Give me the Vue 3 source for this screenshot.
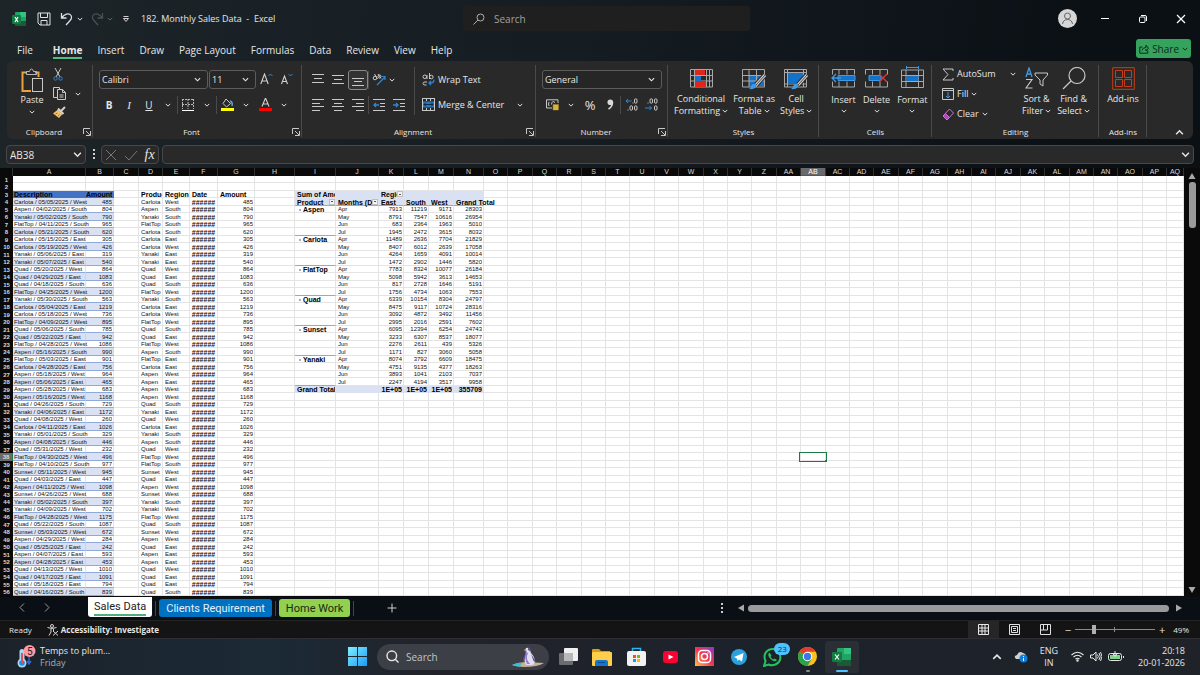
<script setup>
import { h } from 'vue'

const Chevron = (props) =>
  h('svg', { class: 'chev', width: props.s || 6, height: props.s || 6, viewBox: '0 0 8 8', fill: 'none', stroke: 'currentColor', 'stroke-width': 1.3 }, [
    h('path', { d: props.up ? 'M1 5.5 4 2.5 7 5.5' : 'M1 2.5 4 5.5 7 2.5' })
  ])
Chevron.props = { s: String, up: Boolean }

const Launcher = () =>
  h('svg', { width: 8, height: 8, viewBox: '0 0 8 8', fill: 'none', stroke: '#c8c8c8' }, [
    h('path', { d: 'M.5 6V.5H7M3 3l4 4M7.500 3v4.500H3' })
  ])

const menu = ['File', 'Home', 'Insert', 'Draw', 'Page Layout', 'Formulas', 'Data', 'Review', 'View', 'Help']

const letters = 'ABCDEFGHIJKLMNOPQRSTUVWXYZ'.split('')
const cols = [...letters, ...letters.slice(0, 17).map((l) => 'A' + l)]
const baseWidths = [73, 28, 25, 24, 27, 28, 37, 40, 41, 43, 25, 25, 25, 30]
const tailWidths = [24, 25, 24, 25, 24]
const widths = cols.map((c, i) => (i < 14 ? baseWidths[i] : i === cols.length - 1 ? null : tailWidths[(i - 14) % 5]))

const sales = `Carlota 05/05 West 485
Aspen 04/02 South 804
Yanaki 05/02 South 790
FlatTop 04/11 South 965
Carlota 05/21 South 620
Carlota 05/15 East 305
Carlota 05/19 West 426
Yanaki 05/06 East 319
Yanaki 05/07 East 540
Quad 05/20 West 864
Quad 04/29 East 1083
Quad 04/18 South 636
FlatTop 04/25 West 1200
Yanaki 05/30 South 563
Carlota 05/04 East 1219
Carlota 05/18 West 736
FlatTop 04/09 West 895
Quad 05/06 South 785
Quad 05/22 East 942
FlatTop 04/28 West 1086
Aspen 05/16 South 990
FlatTop 05/03 East 901
Carlota 04/28 East 756
Aspen 05/18 West 964
Aspen 05/06 East 465
Aspen 05/28 West 683
Aspen 05/16 West 1168
Quad 04/26 South 729
Yanaki 04/06 East 1172
Quad 04/08 West 260
Carlota 04/11 East 1026
Yanaki 05/01 South 329
Aspen 04/08 South 446
Quad 05/31 West 232
FlatTop 04/30 West 496
FlatTop 04/10 South 977
Sunset 05/11 West 945
Quad 04/03 East 447
Aspen 04/11 West 1098
Sunset 04/26 West 688
Yanaki 05/02 South 397
Yanaki 04/09 West 702
FlatTop 04/28 West 1175
Quad 05/22 South 1087
Sunset 05/03 West 672
Aspen 04/29 West 284
Quad 05/25 East 242
Aspen 04/07 East 593
Aspen 04/28 East 453
Quad 04/13 West 1010
Quad 04/17 East 1091
Quad 05/18 East 794
Quad 04/16 South 839`.split('\n').map((l) => l.split(' '))

const products = ['Aspen', 'Carlota', 'FlatTop', 'Quad', 'Sunset', 'Yanaki']
const months = ['Apr', 'May', 'Jun', 'Jul']
const pivot = [
  [7913, 11219, 9171, 28303], [8791, 7547, 10616, 26954], [683, 2364, 1963, 5010], [1945, 2472, 3615, 8032],
  [11489, 2636, 7704, 21829], [8407, 6012, 2639, 17058], [4264, 1659, 4091, 10014], [1472, 2902, 1446, 5820],
  [7783, 8324, 10077, 26184], [5098, 5942, 3613, 14653], [817, 2728, 1646, 5191], [1756, 4734, 1063, 7553],
  [6339, 10154, 8304, 24797], [8475, 9117, 10724, 28316], [3092, 4872, 3492, 11456], [2995, 2016, 2591, 7602],
  [6095, 12394, 6254, 24743], [3233, 6307, 8537, 18077], [2276, 2611, 439, 5326], [1171, 827, 3060, 5058],
  [8074, 3792, 6609, 18475], [4751, 9135, 4377, 18263], [3893, 1041, 2103, 7037], [2247, 4194, 3517, 9958]
]

function cellsFor(row) {
  const c = {}
  const put = (col, t, cls = '') => { c[col] = { t, cls } }
  if (row === 3) {
    put('A', 'Description', 'head desc')
    put('B', 'Amount', 'head num')
    put('D', 'Product', 'bold')
    put('E', 'Region', 'bold')
    put('F', 'Date', 'bold')
    put('G', 'Amount', 'bold')
    put('I', 'Sum of Amount', 'bold pv')
    put('J', '', 'pv')
    put('K', 'Region', 'bold pv drop')
    for (const k of 'LMN') put(k, '', 'pv')
  }
  if (row > 3) {
    const [p, d, r, a] = sales[row - 4]
    const band = row % 2 ? 'edge' : 'edge band'
    put('A', `${p} / ${d}/2025 / ${r}`, band + ' desc')
    put('B', a, band + ' num')
    put('D', p)
    put('E', r)
    put('F', '######', 'hash')
    put('G', a, 'num')
  }
  if (row === 4) {
    put('I', 'Product', 'bold pv pvh drop')
    put('J', 'Months (Date)', 'bold pv pvh drop')
    put('K', 'East', 'bold pv pvh')
    put('L', 'South', 'bold pv pvh')
    put('M', 'West', 'bold pv pvh')
    put('N', 'Grand Total', 'bold pv pvh spill')
  }
  if (row > 4 && row < 29) {
    const i = row - 5
    put('I', i % 4 ? '' : products[i / 4], i % 4 === 0 ? 'bold item' : i % 4 === 3 ? 'sep' : '')
    put('J', months[i % 4])
    'KLMN'.split('').forEach((k, n) => put(k, pivot[i][n], 'num'))
  }
  if (row === 29) {
    put('I', 'Grand Total', 'bold pv')
    put('J', '', 'pv')
    ;['1E+05', '1E+05', '1E+05', '355709'].forEach((v, n) => put('KLMN'[n], v, 'bold pv num'))
  }
  if (row === 38) put('AB', '', 'sel')
  return cols.map((k) => c[k] || { t: '', cls: '' })
}
const rows = Array.from({ length: 56 }, (_, i) => ({ n: i + 1, cells: cellsFor(i + 1) }))
</script>

<template>
  <div class="app">
    <header class="titlebar">
      <div class="quick">
        <svg class="logo" width="14" height="14" viewBox="0 0 14 14"><rect x="3" width="11" height="14" rx="1" fill="#21a366"/><rect x="8" width="6" height="5" fill="#33c481"/><rect x="3" y="9" width="11" height="5" fill="#185c37"/><rect y="3" width="9" height="9" rx="1" fill="#107c41"/><path d="m3 5 3 5M6 5l-3 5" stroke="#fff" stroke-width="1.2"/></svg>
        <button class="ib save" aria-label="Save"><svg width="14" height="14" viewBox="0 0 14 14" fill="none" stroke="#e0e0e0"><path d="M1 1h12v12H3l-2-2zM3.500 1v4.500h7V1M4 13V8.500h6V13"/></svg></button>
        <button class="ib undo" aria-label="Undo"><svg width="14" height="14" viewBox="0 0 14 14" fill="none" stroke="#e0e0e0" stroke-width="1.3"><path d="M1.500 1v5h5M1.800 5.800C4 2 9 .5 11 3.500c2 3-1 5-5 9.500"/></svg></button>
        <Chevron class="qc" />
        <button class="ib redo" aria-label="Redo"><svg width="14" height="14" viewBox="0 0 14 14" fill="none" stroke="#4a5055" stroke-width="1.300"><path d="M12.500 1v5h-5M12.200 5.800C10 2 5 .5 3 3.500c-2 3 1 5 5 9.500"/></svg></button>
        <Chevron class="qc dim" />
        <svg class="cust" width="8" height="8" viewBox="0 0 8 8" fill="none" stroke="#d0d0d0"><path d="M1.500 1.500h5M1.500 3.500h5L4 6.500z"/></svg>
        <span class="doc">182. Monthly Sales Data&nbsp; -&nbsp; Excel</span>
      </div>
      <label class="search"><svg width="12" height="12" viewBox="0 0 12 12" fill="none" stroke="#b0b0b0"><circle cx="7.500" cy="4.500" r="3.500"/><path d="M5 7 .5 11.500"/></svg><input type="text" placeholder="Search" aria-label="Search" /></label>
      <div class="window">
        <button class="avatar" aria-label="Account"><svg width="19" height="19" viewBox="0 0 19 19" fill="none" stroke="#666"><circle cx="9.500" cy="9.500" r="9.500" fill="#d6d6d6" stroke="none"/><circle cx="9.500" cy="7" r="3"/><path d="M4.500 15c.5-6 9.500-6 10 0"/></svg></button>
        <button class="wb" aria-label="Minimize"><svg width="10" height="10" viewBox="0 0 10 10" stroke="#fff"><path d="M1 4.500h8"/></svg></button>
        <button class="wb" aria-label="Restore"><svg width="10" height="10" viewBox="0 0 10 10" fill="none" stroke="#fff"><rect x="1.500" y="3" width="5.500" height="5.500" rx="1"/><path d="M3 1.500h4q1.500 0 1.500 1.500v4"/></svg></button>
        <button class="wb" aria-label="Close"><svg width="10" height="10" viewBox="0 0 10 10" stroke="#fff" stroke-width="1.200"><path d="m1 1 8 8M9 1 1 9"/></svg></button>
      </div>
    </header>

    <nav class="menu">
      <a v-for="m in menu" :key="m" href="#" :class="{ on: m === 'Home', file: m === 'File' }">{{ m }}</a>
      <button class="share"><svg width="10" height="10" viewBox="0 0 10 10" fill="none" stroke="#0b2b18"><path d="M3.500 3H.8v6.200h8V6.500M3 6.500q.5-3 4-3V1.200l2.500 3L7 7V5"/></svg>Share<Chevron /></button>
    </nav>

    <section class="ribbon">
      <div class="group tools">
        <div class="gbody clip">
          <button class="big paste"><svg width="24" height="26" viewBox="0 0 24 26" fill="none"><path d="M11 23H2.500V4.500H7M15 4.500h3.500V9" stroke="#e8a33d" stroke-width="2"/><path d="M6.500 6.500V3.500h3q.5-2.500 2-2.500t2 2.500h3v3z" stroke="#b8b8b8"/><rect x="12.500" y="10.500" width="10" height="13" fill="#292929" stroke="#c8c8c8"/></svg><span>Paste</span><Chevron /></button>
          <div class="cliplist">
            <button class="ib" aria-label="Cut"><svg width="10" height="13" viewBox="0 0 10 13" fill="none"><path d="M2 0l5 9M8 0 3 9" stroke="#c8c8c8"/><circle cx="2.500" cy="10.500" r="1.700" stroke="#2b88d8"/><circle cx="7.500" cy="10.500" r="1.700" stroke="#2b88d8"/></svg></button>
            <div class="cprow"><button class="ib" aria-label="Copy"><svg width="13" height="13" viewBox="0 0 13 13" fill="none" stroke="#c8c8c8"><path d="M4 10.500H.5V.5h6v2"/><path d="M4.500 2.500h5l3 3v7h-8zM9.500 2.500v3h3M6.500 8h4M6.500 10h4"/></svg></button><Chevron /></div>
            <button class="ib" aria-label="Format Painter"><svg width="13" height="12" viewBox="0 0 13 12"><path d="m5 3.500 4.500 4.500L6 12 0 7.500z" fill="#f2c06b"/><path d="m2.500 8 2-1M5 10l1.500-1.500" stroke="#8a6420" stroke-width=".8"/><path d="m5 2.500 5.500 5.500M8 5l4-4" stroke="#d0d0d0" stroke-width="2"/></svg></button>
          </div>
        </div>
        <footer>Clipboard<button class="launch" aria-label="Clipboard options"><Launcher /></button></footer>
      </div>

      <div class="group tools">
        <div class="gbody">
          <div class="row">
            <label class="sel-box f1"><select aria-label="Font"><option>Calibri</option></select><Chevron s="7" /></label>
            <label class="sel-box f2"><select aria-label="Font size"><option>11</option></select><Chevron s="7" /></label>
            <button class="ib w20" aria-label="Increase font size"><svg width="13" height="13" viewBox="0 0 13 13" fill="none"><path d="M.8 11 4.500 1 8.200 11M2 8h5" stroke="#d0d0d0" stroke-width="1.100"/><path d="m8.500 3 2-2 2 2" stroke="#2b88d8"/></svg></button>
            <button class="ib w20" aria-label="Decrease font size"><svg width="13" height="13" viewBox="0 0 13 13" fill="none"><path d="M1.500 11 4.500 3l3 8M2.500 8.500h4" stroke="#d0d0d0" stroke-width="1.100"/><path d="m8.500 1 2 2 2-2" stroke="#2b88d8"/></svg></button>
          </div>
          <div class="row">
            <button class="ib w20 b">B</button><button class="ib w20 i">I</button><button class="ib w20 u">U</button><Chevron class="w18" />
            <i class="div"></i>
            <button class="ib w20" aria-label="Borders"><svg width="12" height="12" viewBox="0 0 12 12" fill="none" stroke="#b8b8b8"><path d="M.5 0v10M11.500 0v10M6 0v10M0 .5h12M0 5.500h12" stroke-dasharray="2 1"/><path d="M0 11.500h12" stroke="#fff"/></svg></button><Chevron class="w18" />
            <i class="div"></i>
            <button class="ib w20" aria-label="Fill color"><svg width="13" height="13" viewBox="0 0 13 13" fill="none"><path d="m5 1 4.500 4.500-4 3.500L2 5.500z" stroke="#c8c8c8"/><path d="M9 3q3 1 2 5" stroke="#5aa5e0" stroke-width="1.500"/><rect y="10" width="13" height="3" fill="#ff0"/></svg></button><Chevron class="w18" />
            <button class="ib w20" aria-label="Font color"><svg width="13" height="13" viewBox="0 0 13 13" fill="none"><path d="M3 8.500 6.500 0 10 8.500M4 6h5" stroke="#d0d0d0" stroke-width="1.100"/><rect y="10" width="13" height="3" fill="#f00"/></svg></button><Chevron class="w18" />
          </div>
        </div>
        <footer>Font<button class="launch" aria-label="Font options"><Launcher /></button></footer>
      </div>

      <div class="group tools">
        <div class="gbody align">
          <div class="acol">
            <div class="row">
              <button class="ib w20" aria-label="Top align"><svg width="12" height="12" viewBox="0 0 12 12" stroke="#c8c8c8"><path d="M0 .5h12M2 4.500h8M0 8.500h12"/></svg></button>
              <button class="ib w20" aria-label="Middle align"><svg width="12" height="12" viewBox="0 0 12 12" stroke="#c8c8c8"><path d="M0 1.500h12M2 5.500h8M0 9.500h12"/></svg></button>
              <button class="ib w20 pressed" aria-label="Bottom align"><svg width="12" height="12" viewBox="0 0 12 12" stroke="#c8c8c8"><path d="M0 4.500h12M2 7.500h8M0 11.500h12"/></svg></button>
              <i class="div"></i>
              <button class="ib w20" aria-label="Orientation"><svg width="14" height="13" viewBox="0 0 14 13" fill="none"><circle cx="3" cy="5" r="1.800" stroke="#c8c8c8"/><path d="m2.500 1 3 5M6 1l3 4.500" stroke="#c8c8c8"/><circle cx="7.500" cy="3.500" r="1.500" stroke="#c8c8c8"/><path d="m5 12 8-8M9.500 3.500H13V7" stroke="#2b88d8" stroke-width="1.200"/></svg></button><Chevron />
            </div>
            <div class="row">
              <button class="ib w20" aria-label="Align left"><svg width="12" height="12" viewBox="0 0 12 12" stroke="#c8c8c8"><path d="M0 .5h12M0 4.500h8M0 7.500h12M0 11.500h8"/></svg></button>
              <button class="ib w20" aria-label="Center"><svg width="12" height="12" viewBox="0 0 12 12" stroke="#c8c8c8"><path d="M0 .5h12M2 4.500h8M0 7.500h12M2 11.500h8"/></svg></button>
              <button class="ib w20" aria-label="Align right"><svg width="12" height="12" viewBox="0 0 12 12" stroke="#c8c8c8"><path d="M0 .5h12M4 4.500h8M0 7.500h12M4 11.500h8"/></svg></button>
              <i class="div"></i>
              <button class="ib w20" aria-label="Decrease indent"><svg width="12" height="12" viewBox="0 0 12 12" fill="none" stroke="#c8c8c8"><path d="M0 .5h12M7 4.500h5M7 7.500h5M0 11.500h12"/><path d="M6 6H1M3 4 1 6l2 2" stroke="#2b88d8" stroke-width="1.300"/></svg></button>
              <button class="ib w20" aria-label="Increase indent"><svg width="12" height="12" viewBox="0 0 12 12" fill="none" stroke="#c8c8c8"><path d="M0 .5h12M7 4.500h5M7 7.500h5M0 11.500h12"/><path d="M0 6h5M3 4l2 2-2 2" stroke="#2b88d8" stroke-width="1.300"/></svg></button>
            </div>
          </div>
          <div class="wcol">
            <button class="lb"><svg width="13" height="13" viewBox="0 0 13 13" fill="none" stroke="#c8c8c8"><circle cx="2.800" cy="3.800" r="1.800"/><path d="M5 2v4M7.500 0v6M5 9H3q-2 0-2 1.500T3 12h1.500"/><circle cx="9.300" cy="4" r="1.800"/><path d="M12 6.500q0 4-5 3.500M9 8 7 10l2 2" stroke="#2b88d8" stroke-width="1.300"/></svg>Wrap Text</button>
            <button class="lb"><svg width="13" height="13" viewBox="0 0 13 13" fill="none"><rect x=".5" y=".5" width="12" height="12" stroke="#c8c8c8"/><path d="M4.500 0v3M8.500 0v3M4.500 10v3M8.500 10v3" stroke="#c8c8c8"/><rect x="1" y="3.500" width="11" height="6" fill="#2878be"/><path d="M2 6.500h9M4 4.500l-2 2 2 2M9 4.500l2 2-2 2" stroke="#0a2a48"/></svg>Merge &amp; Center<Chevron class="mc" /></button>
          </div>
        </div>
        <footer>Alignment<button class="launch" aria-label="Alignment options"><Launcher /></button></footer>
      </div>

      <div class="group tools">
        <div class="gbody">
          <div class="row"><label class="sel-box f3"><select aria-label="Number format"><option>General</option></select><Chevron s="7" /></label></div>
          <div class="row">
            <button class="ib w20" aria-label="Accounting format"><svg width="13" height="12" viewBox="0 0 13 12" fill="none"><path d="M12 4V.8H.5V9H6" stroke="#c8c8c8"/><path d="M3 3q-1 2 0 4M9 3.500Q6 1 5.500 5.500" stroke="#c8c8c8"/><path d="M7 5.500h5.500V11H7zM7 7h5.500M7 9h5.500" fill="#f2c94c" stroke="#9c7a20" stroke-width=".6"/></svg></button><Chevron class="w18" />
            <button class="ib w20 pct">%</button>
            <button class="ib w20" aria-label="Comma style"><svg width="7" height="11" viewBox="0 0 7 11"><circle cx="3.300" cy="3.300" r="2.800" fill="#d8d8d8"/><path d="M5.500 3.500q0 4-4 6.500" fill="none" stroke="#d8d8d8" stroke-width="1.500"/></svg></button>
            <i class="div"></i>
            <button class="ib w20" aria-label="Increase decimal"><svg width="13" height="13" viewBox="0 0 13 13" fill="none" stroke="#c8c8c8"><rect x="9.500" y=".8" width="2.500" height="4.400" rx="1.200"/><rect x="5" y="7.800" width="2.500" height="4.400" rx="1.200"/><rect x="9.500" y="7.800" width="2.500" height="4.400" rx="1.200"/><path d="M2.500 12h1M7.500 5h1"/><path d="M6.500 3H1M3 1 1 3l2 2" stroke="#2b88d8"/></svg></button>
            <button class="ib w20" aria-label="Decrease decimal"><svg width="13" height="13" viewBox="0 0 13 13" fill="none" stroke="#c8c8c8"><rect x="5" y=".8" width="2.500" height="4.400" rx="1.200"/><rect x="9.500" y=".8" width="2.500" height="4.400" rx="1.200"/><rect x="9.500" y="7.800" width="2.500" height="4.400" rx="1.200"/><path d="M2.500 5h1"/><path d="M0 10h6.500M4.500 8l2 2-2 2" stroke="#2b88d8"/></svg></button>
          </div>
        </div>
        <footer>Number<button class="launch" aria-label="Number options"><Launcher /></button></footer>
      </div>

      <div class="group">
        <div class="gbody bigs styles">
          <button class="big"><svg width="23" height="19" viewBox="0 0 23 19" fill="none"><path d="M.5.500h22v17.500H.5zM.5 6.500h22M.5 12h22M4.500 0v18M16.500 0v18M19.500 0v18" stroke="#a8a8a8"/><path d="M5 1h10v5H5zM5 12h11v6H5z" fill="#e1251b"/><path d="M5 7h6v5H5z" fill="#1473c8"/></svg><span>Conditional<br />Formatting<Chevron /></span></button>
          <button class="big"><svg width="25" height="21" viewBox="0 0 25 21" fill="none"><path d="M7 6.500h15V17H7z" fill="#1473c8"/><path d="M.5.500h22v17.500H.5zM.5 6.500h22M.5 12h22M7 0v18M14.500 0v18" stroke="#a8a8a8"/><path d="M23 6 14 16" stroke="#292929" stroke-width="5"/><path d="M23 6 14 16" stroke="#d0d0d0" stroke-width="3"/><path d="M23 6 14 16" stroke="#444" stroke-width="1"/><path d="M14 15q1 6-7 5 2-1 2-3 2-3 5-2z" fill="#3e9be8"/></svg><span>Format as<br />Table<Chevron /></span></button>
          <button class="big"><svg width="25" height="21" viewBox="0 0 25 21" fill="none"><path d="M.5.500h22v17.500H.5zM.5 3.500h22M3.500 0v18M19.500 0v18M.5 15h22" stroke="#a8a8a8"/><path d="M4 4h15v11H4z" fill="#1473c8"/><path d="M23 6 14 16" stroke="#292929" stroke-width="5"/><path d="M23 6 14 16" stroke="#d0d0d0" stroke-width="3"/><path d="M23 6 14 16" stroke="#444" stroke-width="1"/><path d="M14 15q1 6-7 5 2-1 2-3 2-3 5-2z" fill="#3e9be8"/></svg><span>Cell<br />Styles<Chevron /></span></button>
        </div>
        <footer>Styles</footer>
      </div>

      <div class="group">
        <div class="gbody bigs cells">
          <button class="big"><svg width="25" height="19" viewBox="0 0 25 19" fill="none"><path d="M1.500.500h22v17.500h-22zM8 0v18M16 0v18" stroke="#a8a8a8"/><path d="M1 5.500h24v7H1z" fill="#292929"/><path d="M7 6.500h17v5H7z" fill="#1473c8" stroke="#3e9be8"/><path d="M10 9H1M5 5 1 9l4 4" stroke="#3e9be8" stroke-width="1.300"/></svg><span>Insert</span><Chevron /></button>
          <button class="big"><svg width="23" height="19" viewBox="0 0 23 19" fill="none"><path d="M.5.500h22v17.500H.5zM7.500 0v18M15 0v18" stroke="#a8a8a8"/><path d="M0 5.500h23v7H0z" fill="#292929"/><path d="M4 6.500h12v5H4z" fill="#1473c8" stroke="#3e9be8"/><path d="m14 5 8 8M22 5l-8 8" stroke="#d83b3b" stroke-width="1.200"/></svg><span>Delete</span><Chevron /></button>
          <button class="big fmt"><svg width="23" height="22" viewBox="0 0 23 22" fill="none"><path d="M.5 4h22v17.500H.5zM.5 9.500h22M.5 15.500h22M5 4v17M17.500 4v17" stroke="#a8a8a8"/><path d="M5.500 10h12v5h-12z" fill="#1473c8"/><path d="M5.500 0v3M17.500 0v3M6 1.500h11" stroke="#3e9be8"/></svg><span>Format</span><Chevron /></button>
        </div>
        <footer>Cells</footer>
      </div>

      <div class="group">
        <div class="gbody edit">
          <div class="elist">
            <button class="lb"><svg width="12" height="13" viewBox="0 0 12 13" fill="none" stroke="#c8c8c8"><path d="M11 3V1H1l5 5.500L1 12h10v-2"/></svg>AutoSum<Chevron class="as" /></button>
            <button class="lb"><svg width="12" height="12" viewBox="0 0 12 12" fill="none" stroke="#c8c8c8"><path d="M.5.500h11v11H.5zM.5 2.500h11"/><path d="M6 4v6M4 8l2 2 2-2" stroke="#3e9be8"/></svg>Fill<Chevron /></button>
            <button class="lb"><svg width="12" height="13" viewBox="0 0 12 13" fill="none" stroke="#c678d0"><path d="m7.500 1 4 4-6.500 7-4-4z"/><path d="m3.500 5.500 4 4L5 12 1 8z" fill="#b146c2"/></svg>Clear<Chevron /></button>
          </div>
          <button class="big e1"><svg width="23" height="22" viewBox="0 0 23 22" fill="none"><path d="M1 10 4 1l3 9M2 7h4" stroke="#3e9be8" stroke-width="1.300"/><path d="M1 12.500h6L1 21h6.500" stroke="#c8c8c8" stroke-width="1.200"/><path d="M10 6h12.500v2L18 13v6l-3-2v-4l-5-5z" stroke="#c8c8c8"/></svg><span>Sort &amp;<br />Filter<Chevron /></span></button>
          <button class="big e2"><svg width="24" height="23" viewBox="0 0 24 23" fill="none" stroke="#c8c8c8" stroke-width="1.200"><circle cx="15" cy="8.500" r="8"/><path d="M9 14 1 22"/></svg><span>Find &amp;<br />Select<Chevron /></span></button>
        </div>
        <footer>Editing</footer>
      </div>

      <div class="group">
        <div class="gbody bigs addins">
          <button class="big"><svg width="23" height="23" viewBox="0 0 23 23" fill="none" stroke="#c43e1c"><path d="M.7.700h21.600v21.600H.7z"/><path d="M3.500 3.500h7v7h-7zM12.500 3.500h7v7h-7zM3.500 12.500h7v7h-7zM12.500 12.500h7v7h-7z"/></svg><span>Add-ins</span></button>
        </div>
        <footer>Add-ins</footer>
      </div>

      <div class="group last"><button class="ib" aria-label="Collapse ribbon"><Chevron s="9" up /></button></div>
    </section>

    <section class="formula">
      <label class="namebox"><input type="text" value="AB38" aria-label="Name box" /><Chevron s="9" /></label>
      <svg class="dots" width="3" height="11" viewBox="0 0 3 11" fill="#d0d0d0"><rect width="2" height="2"/><rect y="4" width="2" height="2"/><rect y="8" width="2" height="2"/></svg>
      <div class="fx">
        <button class="ib" aria-label="Cancel"><svg width="12" height="12" viewBox="0 0 12 12" stroke="#777"><path d="m1 1 10 10M11 1 1 11"/></svg></button>
        <button class="ib" aria-label="Enter"><svg width="14" height="12" viewBox="0 0 14 12" fill="none" stroke="#777"><path d="m1 7 4 4 8-9"/></svg></button>
        <button class="ib fxb">fx</button>
      </div>
      <label class="fbar"><input type="text" aria-label="Formula" /><Chevron s="9" /></label>
    </section>

    <main class="sheet">
      <div class="clipgrid">
        <table>
          <colgroup><col class="rh" /><col v-for="(w, i) in widths" :key="i" :style="w ? { width: w + 'px' } : null" /></colgroup>
          <thead><tr><th class="corner"></th><th v-for="c in cols" :key="c" :class="{ act: c === 'AB' }">{{ c }}</th></tr></thead>
          <tbody>
            <tr v-for="r in rows" :key="r.n">
              <th :class="{ act: r.n === 38 }">{{ r.n }}</th>
              <td v-for="(c, i) in r.cells" :key="i" :class="c.cls">
                <div v-if="c.t !== ''" class="v"><i v-if="c.cls.includes('item')" class="exp"></i>{{ c.t }}<button v-if="c.cls.includes('drop')" class="dd" aria-label="Filter"></button></div>
                <div v-else-if="c.cls === 'sel'" class="cursor"></div>
              </td>
            </tr>
          </tbody>
        </table>
      </div>
      <div class="vscroll">
        <svg width="8" height="6" viewBox="0 0 8 6" fill="#a8a8a8"><path d="M4 0 7.500 6h-7z"/></svg>
        <div class="vtrack"><div class="vthumb"></div></div>
        <svg width="8" height="6" viewBox="0 0 8 6" fill="#a8a8a8"><path d="M4 6 7.500 0h-7z"/></svg>
      </div>
    </main>

    <nav class="tabs">
      <div class="tnav"><button class="ib" aria-label="Previous sheet"><svg width="6" height="9" viewBox="0 0 6 9" fill="none" stroke="#999"><path d="M5 .500 1 4.500l4 4"/></svg></button><button class="ib" aria-label="Next sheet"><svg width="6" height="9" viewBox="0 0 6 9" fill="none" stroke="#999"><path d="m1 .500 4 4-4 4"/></svg></button></div>
      <a href="#" class="tab t1"><span>Sales Data</span></a><i></i>
      <a href="#" class="tab t2">Clients Requirement</a><i></i>
      <a href="#" class="tab t3">Home Work</a><i></i>
      <button class="ib plus" aria-label="New sheet"><svg width="10" height="10" viewBox="0 0 10 10" stroke="#d0d0d0"><path d="M5 .5v9M.5 5h9"/></svg></button>
      <div class="hscroll">
        <svg width="3" height="10" viewBox="0 0 3 10" fill="#ccc"><rect width="2" height="2"/><rect y="4" width="2" height="2"/><rect y="8" width="2" height="2"/></svg>
        <svg class="la" width="6" height="8" viewBox="0 0 6 8" fill="#a8a8a8"><path d="M0 4 6 .500v7z"/></svg>
        <div class="hthumb"></div>
        <svg width="6" height="8" viewBox="0 0 6 8" fill="#a8a8a8"><path d="M6 4 0 .500v7z"/></svg>
      </div>
    </nav>

    <footer class="status">
      <span>Ready</span>
      <svg class="acc" width="12" height="12" viewBox="0 0 12 12" fill="none" stroke="#d8d8d8"><circle cx="5" cy="2" r="1.500"/><path d="M.5 3.500q4.500 2 9 0M4 5v3l-2 3.500M6.500 5v2M6 7l5 4.500M11 7l-5 4.500"/></svg>
      <b>Accessibility: Investigate</b>
      <div class="views">
        <button class="ib on" aria-label="Normal"><svg width="11" height="11" viewBox="0 0 11 11" fill="none" stroke="#e8e8e8"><path d="M.5.500h10v10H.5zM.5 4h10M.5 7h10M4 .500v10M7 .500v10"/></svg></button>
        <button class="ib" aria-label="Page layout"><svg width="11" height="11" viewBox="0 0 11 11" fill="none" stroke="#e0e0e0"><path d="M.5.500h10v10H.5zM2.500 2.500h6v6h-6zM4 4.500h3M4 6.500h3"/></svg></button>
        <button class="ib" aria-label="Page break"><svg width="11" height="11" viewBox="0 0 11 11" fill="none" stroke="#e0e0e0"><path d="M.5.500h10v10H.5zM3.500 1v5H.5M3.500 6h4V1"/></svg></button>
      </div>
      <div class="zoom"><span>−</span><input type="range" min="0" max="100" value="22" aria-label="Zoom" /><span>+</span></div>
      <span class="zv">49%</span>
    </footer>

    <footer class="taskbar">
      <a href="#" class="weather">
        <svg width="19" height="24" viewBox="0 0 19 24"><rect x="2.500" y="4" width="5" height="14" rx="2.500" fill="#a9d8f5"/><circle cx="5" cy="18" r="4.500" fill="#a9d8f5"/><circle cx="5" cy="18" r="2.800" fill="#1e8de0"/><path d="M5 8v10" stroke="#e24b5b" stroke-width="2"/><path d="M12 12v6m-2-2 2 3 2-3" stroke="#2f63d8" stroke-width="1.500" fill="none"/><circle cx="12.500" cy="6" r="6" fill="#ff99a4"/><text x="10" y="10" font-size="10" fill="#222" font-family="Roboto, sans-serif">5</text></svg>
        <span>Temps to plum...<br /><em>Friday</em></span>
      </a>
      <div class="apps">
        <button class="ib" aria-label="Start"><svg width="19" height="19" viewBox="0 0 19 19"><defs><linearGradient id="wn" x2="1" y2="1"><stop stop-color="#7ff0ff"/><stop offset="1" stop-color="#1a9bf5"/></linearGradient></defs><path d="M0 0h9v9H0zM10 0h9v9h-9zM0 10h9v9H0zM10 10h9v9h-9z" fill="url(#wn)"/></svg></button>
        <label class="tsearch"><svg width="13" height="13" viewBox="0 0 13 13" fill="none" stroke="#e8e8e8" stroke-width="1.400"><circle cx="5.800" cy="5.800" r="4.800"/><path d="m9.500 9.500 3 3"/></svg><input type="text" placeholder="Search" aria-label="Search the web" />
          <svg width="34" height="20" viewBox="0 0 34 20"><path d="M1 18q8-3 14-3l18 1q-6 4-20 4-6 0-12-2z" fill="#c9b394"/><path d="M1 18q6-3 10-2l-2 3.500q-4 0-8-1.500z" fill="#35c0d8"/><path d="M15 1q3-1 4 2l1 3q4 4 4 9l-2 3h-7q-3-5 0-11-1-3 0-6z" fill="#e2dff0"/><path d="M15 2q1 4 0 6l-3 8q0-6 2.500-9-.5-3 .5-5zM17 .5q3 0 2.500 4L17 3zM20 7l4 6 .5 2-2-1z" fill="#5f5390"/><path d="M15 5q-2 6 1 12h3q-5-5-2-11z" fill="#8f7fd0"/><path d="m12.500 3.500 2.500-2v2z" fill="#e8a33d"/></svg></label>
        <div class="icons">
          <button class="ib" aria-label="Task view"><svg width="19" height="19" viewBox="0 0 19 19"><rect y="6" width="14" height="12" rx="1" fill="#6a6c70"/><rect x="5" y="1" width="14" height="13" rx="1" fill="#f0f0f0"/><rect x="5" y="6" width="9" height="8" fill="#b8b8ba"/></svg></button>
          <button class="ib" aria-label="File Explorer"><svg width="20" height="18" viewBox="0 0 20 18"><path d="M1 1h6l2 2h9v5H0V2q0-1 1-1z" fill="#dd9a13"/><rect y="4" width="20" height="14" rx="1" fill="#ffcf4b"/><path d="M3 18v-4q0-2 2-2h9q2 0 2 2v4z" fill="#1576cf"/><path d="M6 14.500h7" stroke="#0a4a90"/></svg></button>
          <button class="ib" aria-label="Store"><svg width="19" height="20" viewBox="0 0 19 20"><path d="M5.500 6V1.500h8V6" fill="none" stroke="#2db4f0" stroke-width="1.500"/><rect y="4" width="19" height="15" rx="2" fill="#f2f2f2"/><path d="M6 8h3v3H6z" fill="#f25022"/><path d="M10 8h3v3h-3z" fill="#7fba00"/><path d="M6 12h3v3H6z" fill="#00a4ef"/><path d="M10 12h3v3h-3z" fill="#ffb900"/></svg></button>
          <button class="ib" aria-label="YouTube"><svg width="15" height="12" viewBox="0 0 15 12"><rect width="15" height="12" rx="3" fill="#ff0033"/><path d="m5.500 3.500 5 2.500-5 2.500z" fill="#fff"/></svg></button>
          <button class="ib" aria-label="Instagram"><svg width="19" height="19" viewBox="0 0 19 19" fill="none" stroke="#fff" stroke-width="1.500"><defs><linearGradient id="ig" x1="0" y1="1" x2="1" y2="0"><stop stop-color="#ffc24a"/><stop offset=".5" stop-color="#f0364f"/><stop offset="1" stop-color="#8a35d6"/></linearGradient></defs><rect width="19" height="19" fill="url(#ig)" stroke="none"/><rect x="3.500" y="3.500" width="12" height="12" rx="3.500"/><circle cx="9.500" cy="9.500" r="3"/><path d="M12.500 6h1"/></svg></button>
          <button class="ib" aria-label="Telegram"><svg width="16" height="16" viewBox="0 0 16 16"><circle cx="8" cy="8" r="8" fill="#2aa1dc"/><path d="m3 8 9.500-4-1.500 8.500-3-2-1.500 1.500-.5-2.500z" fill="#fff"/></svg></button>
          <button class="ib wa" aria-label="WhatsApp"><svg width="20" height="20" viewBox="0 0 20 20" fill="none"><path d="M1 19l1.500-5q-3-7 3-11 7-3 11 3 3 8-4 11.500-4 1.500-7 0z" stroke="#25c35e" stroke-width="2"/><path d="M6.500 5.500q-3 2 1 6.500 4.500 4 6.500 1l-2.500-1.500-1.500 1Q8 11 7.500 9.500l1-1z" fill="#25c35e"/></svg><span class="badge">23</span></button>
          <button class="ib run" aria-label="Chrome"><svg width="19" height="19" viewBox="0 0 19 19"><circle cx="9.500" cy="9.500" r="9.500" fill="#fbc116"/><path d="M9.500 9.500 1.300 4.750A9.500 9.500 0 0 1 17.700 4.750H9.500z" fill="#e33b2e"/><path d="M1.300 4.750A9.500 9.500 0 0 0 9.500 19l4.100-7.100-4.100-2.400z" fill="#2ba24c"/><circle cx="9.500" cy="9.500" r="4.700" fill="#fff"/><circle cx="9.500" cy="9.500" r="3.700" fill="#3b78e7"/></svg></button>
          <button class="ib active" aria-label="Excel"><svg width="19" height="18" viewBox="0 0 19 18"><rect x="5" width="14" height="18" rx="1" fill="#21a366"/><rect x="12" width="7" height="6" fill="#33c481"/><path d="M5 12h14v6H5z" fill="#185c37"/><rect y="4" width="10" height="10" rx="1" fill="#107c41"/><path d="m3 6.500 4 5M7 6.500l-4 5" stroke="#fff" stroke-width="1.200"/></svg></button>
        </div>
      </div>
      <div class="tray">
        <Chevron s="10" up />
        <svg class="cloud" width="14" height="13" viewBox="0 0 14 13"><path d="M2 9q-3-3 1-4 2-5 6-2 4 1 3 6z" fill="#d0d0d0"/><circle cx="9.500" cy="8.500" r="4" fill="#0f7fdb"/><path d="M9.500 6v1M9.500 8v3" stroke="#fff"/></svg>
        <span class="lang">ENG<br />IN</span>
        <svg width="13" height="11" viewBox="0 0 13 11" fill="none" stroke="#e8e8e8" stroke-width="1.100"><path d="M.5 4q6-5.500 12 0M2.500 6q4-3.500 8 0M4.500 8q2-1.500 4 0"/><circle cx="6.500" cy="9.500" r=".7"/></svg>
        <svg width="12" height="11" viewBox="0 0 12 11" fill="none" stroke="#e8e8e8"><path d="M.5 4H3l3-3v9L3 7H.5zM7.500 3.500q1.500 2 0 4M9 2q2.500 3.500 0 7M10.500 1q3 4.500 0 9"/></svg>
        <svg class="bat" width="16" height="11" viewBox="0 0 16 11" fill="none" stroke="#e8e8e8"><rect x=".5" y="2.500" width="13" height="7" rx="2"/><rect x="2" y="4" width="10" height="4" fill="#7fd68a" stroke="none"/><path d="M15.500 5v2M7 0v5M5 3l2 2.500L9 3"/></svg>
        <span class="clock">20:18<br />20-01-2026</span>
      </div>
    </footer>
  </div>
</template>

<style>
body { background: #0d1218; }
</style>

<style scoped>
* { box-sizing: border-box; }
.app { display: flex; flex-direction: column; min-height: 100vh; overflow: hidden; color: #e6e6e6; font: 9px/12px "Open Sans", "Noto Sans", sans-serif; background: linear-gradient(97deg, #1e2529 0%, #151c22 45%, #0b1015 85%); }
button, input, select { font: inherit; color: inherit; background: none; border: 0; padding: 0; margin: 0; outline: 0; min-width: 0; }
a { color: inherit; text-decoration: none; }
svg { display: block; flex: none; }
.ib { display: flex; align-items: center; justify-content: center; flex: none; }

.titlebar { display: grid; grid-template-columns: 463fr 287fr 450fr; align-items: center; height: 37px; }
.quick { display: flex; align-items: center; padding-left: 12px; }
.save { margin-left: 11px; }
.undo { margin-left: 9px; }
.redo { margin-left: 7px; }
.qc { margin-left: 3px; }
.dim { opacity: .35; }
.cust { margin-left: 9px; }
.doc { margin-left: 11px; }
.search { display: flex; align-items: center; gap: 9px; height: 25px; padding-left: 10px; background: #1f1f1f; border-radius: 3px; }
.search input { flex: 1; font-size: 10px; }
.search input::placeholder { color: #a0a0a0; opacity: 1; }
.window { display: flex; justify-content: flex-end; align-items: center; }
.avatar { margin-right: 9px; }
.wb { display: flex; justify-content: center; align-items: center; width: 38px; height: 30px; }

.menu { display: flex; align-items: center; gap: 15px; height: 24px; padding: 1px 9px 0 17px; font-size: 10px; }
.menu a { height: 18px; line-height: 18px; border-bottom: 2px solid transparent; }
.menu a.on { font-weight: 700; border-color: #4fbf7c; }
.menu a.file { margin-right: 5px; }
.share { display: flex; align-items: center; gap: 3px; height: 19px; margin: 0 0 2px auto; padding: 0 3px; border-radius: 3px; background: #35a35e; color: #0b2b18; }

.ribbon { display: grid; grid-template-columns: 86fr 209fr 234fr 132fr 151fr 113fr 167fr 48fr 46fr; margin: 0 7px; height: 78px; background: #292929; border-radius: 6px; }
.group { display: flex; flex-direction: column; position: relative; padding-bottom: 1px; }
.group:not(.last)::after { content: ""; position: absolute; right: 0; top: 4px; bottom: 4px; width: 1px; background: #4a4a4a; }
.gbody { flex: 1; display: flex; flex-direction: column; padding: 6px 0 0 6px; min-height: 0; }
.group > footer { height: 16px; line-height: 16px; text-align: center; font-size: 8px; position: relative; }
.group.tools > footer { padding-right: 12px; }
.launch { position: absolute; right: 2px; top: 4px; }
.row { display: flex; align-items: center; height: 25px; }
.w20 { width: 20px; height: 20px; }
.w18 { width: 18px; }
.div { width: 1px; height: 18px; background: #4a4a4a; }
.sel-box { display: flex; align-items: center; height: 19px; padding: 0 6px 0 2px; border: 1px solid #5c5c5c; border-radius: 3px; background: #262626; }
.sel-box select { flex: 1; appearance: none; }
.f1 { width: 109px; margin-right: 1px; }
.f2 { width: 47px; }
.f3 { width: 120px; }
.b { font-weight: 700; font-size: 10px; }
.i { font: italic 11px "Liberation Serif", serif; }
.u { font-size: 10px; text-decoration: underline; }
.pct { font-size: 13px; }
.pressed { border: 1px solid #8a8a8a; border-radius: 3px; background: #333; }
.big { display: flex; flex-direction: column; align-items: center; }
.big span { white-space: nowrap; text-align: center; }
.big span .chev { display: inline-block; margin-left: 2px; }
.gbody.clip { flex-direction: row; padding: 7px 0 0 12px; }
.paste { width: 26px; height: 47px; }
.paste span { margin: 0 0 3px; }
.cliplist { display: flex; flex-direction: column; align-items: flex-start; gap: 6px; padding: 0 0 0 8px; }
.cprow { display: flex; align-items: center; gap: 9px; }
.gbody.align { flex-direction: row; }
.acol { width: 107px; border-right: 1px solid #4a4a4a; height: 48px; }
.wcol { display: flex; flex-direction: column; margin-left: 7px; }
.lb { display: flex; align-items: center; gap: 3px; height: 25px; white-space: nowrap; }
.mc { margin-left: 10px; }
.gbody.bigs { flex-direction: row; }
.bigs .big svg:first-child { margin-bottom: auto; }
.bigs .big { justify-content: space-between; }
.styles { gap: 5px; }
.styles .big { height: 48px; }
.gbody.styles { padding-top: 8px; }
.gbody.cells { gap: 7px; padding: 8px 0 0 12px; }
.cells .big { height: 45px; }
.bigs .fmt svg:first-child { margin-top: -3px; }
.cells .big span { margin-bottom: 2px; }
.gbody.edit { flex-direction: row; padding: 3px 0 0 10px; }
.elist .lb { height: 20px; }
.elist { width: 80px; }
.as { margin-left: 11px; }
.edit .big { height: 50px; margin-top: 3px; justify-content: space-between; }
.e2 { margin-left: 6px; }
.gbody.addins { justify-content: center; padding: 6px 0 0; }
.addins .big { height: 38px; }
.last { justify-content: flex-end; align-items: flex-end; padding: 0 9px 4px 0; }

.formula { display: flex; align-items: center; height: 29px; padding: 2px 6px 0; }
.namebox, .fx, .fbar { display: flex; align-items: center; height: 19px; border: 1px solid #484848; border-radius: 4px; background: #292929; }
.namebox { width: 80px; padding: 0 3px 0 3px; font-size: 10px; }
.namebox input { flex: 1; }
.dots { margin: 0 5px 0 7px; }
.fx { width: 58px; justify-content: space-around; }
.fxb { font: italic 14px "Liberation Serif", serif; }
.fbar { flex: 1; margin-left: 3px; padding-right: 3px; }
.fbar input { flex: 1; }

.sheet { display: flex; background: #0a0a0a; padding-bottom: 1px; }
.clipgrid { flex: 1; min-width: 0; overflow: hidden; background: #fff; }
table { table-layout: fixed; width: 100%; border-collapse: separate; border-spacing: 0; font: 6px/6px "Liberation Sans", Arial, sans-serif; color: #111; }
.rh { width: 13px; }
th, td { padding: 0; white-space: nowrap; }
th { background: #0a0a0a; color: #d8d8d8; font-weight: 400; text-align: center; }
thead th { height: 8px; font-size: 7px; border-right: 1px solid #333; }
thead th.act { background: #6a6a6a; color: #fff; border-bottom: 1px solid #1c7a45; }
tbody th { font-size: 6px; font-weight: 700; }
tbody th.act { background: #6a6a6a; border-right: 1px solid #1c7a45; }
tbody tr { height: 7px; }
tbody tr:nth-child(even) { height: 8px; }
td { border-right: 1px solid #e4e4e4; border-bottom: 1px solid #e4e4e4; padding-left: 2px; }
.v { height: 6px; overflow-x: clip; overflow-y: visible; position: relative; line-height: 7px; }
.desc { padding-left: 1px; }
.num { text-align: right; padding-left: 0; padding-right: 1px; }
.bold, .head { font-weight: 700; font-size: 7px; color: #000; }
.head { background: #4472c4; border-color: #4472c4; }
.edge { border-bottom-color: #8ea9db; }
.band { background: #d9e1f2; border-right-color: #c9d3ea; }
.hash { text-align: center; font-weight: 700; font-size: 7px; padding-left: 0; }
.pv { background: #d9e1f2; border-color: #d9e1f2; }
.pvh { border-bottom-color: #8ea9db; }
.sep { border-bottom-color: #8ea9db; }
.spill .v, .desc .v { overflow: visible; }
.exp { display: inline-block; width: 2px; height: 2px; margin: 0 2px 1px 2px; background: #9db0d6; }
.dd { position: absolute; right: 0; top: 0; width: 6px; height: 6px; background: #f4f4f4; border: 1px solid #c0c0c0; }
.dd::after { content: ""; display: block; width: 2px; height: 1px; margin: 1px auto; background: #555; }
.sel { position: relative; }
.cursor { position: absolute; inset: -1px -2px -2px -2px; border: 1px solid #1c7a45; }
.cursor::after { content: ""; position: absolute; right: -1px; bottom: -1px; width: 2px; height: 2px; background: #1c7a45; }
.vscroll { width: 16px; display: flex; flex-direction: column; align-items: center; padding: 5px 0 3px; }
.vtrack { flex: 1; padding-top: 3px; }
.vthumb { width: 7px; height: 46px; border-radius: 3px; background: #9a9a9a; }

.tabs { display: flex; align-items: flex-start; height: 23px; font-size: 11px; font-family: Roboto, sans-serif; background: #0a0f16; }
.tnav { display: flex; gap: 19px; padding: 6px 38px 0 19px; }
.tab { height: 18px; margin-top: 2px; padding: 0 7px; line-height: 19px; border-radius: 3px; }
.tabs > i { width: 1px; height: 15px; margin: 4px 3px 0; background: #444; }
.t1 { margin-top: 0; height: 20px; padding: 1px 6px 0; background: #fff; color: #222; border-radius: 0 0 3px 3px; }
.t1 span { display: block; height: 18px; line-height: 18px; border-bottom: 2px solid #4fae7a; }
.t2 { background: #0070c0; color: #e4f1fb; }
.t3 { background: #92d050; color: #1c2b10; }
.plus { margin: 6px 0 0 30px; }
.hscroll { display: flex; align-items: center; height: 22px; margin-left: auto; width: 479px; padding-right: 18px; }
.la { margin: 0 4px 0 14px; }
.hthumb { flex: 1; height: 7px; margin-right: 7px; border-radius: 4px; background: #9a9a9a; }

.status { display: flex; align-items: center; height: 18px; padding: 0 11px 0 9px; background: #141414; border-top: 1px solid #232323; font-size: 8px; }
.acc { margin: 0 2px 0 15px; }
.views { display: flex; margin-left: auto; }
.views .ib { width: 31px; height: 17px; }
.views .on { background: #262626; }
.zoom { display: flex; align-items: center; gap: 4px; margin-left: 4px; font-size: 11px; }
.zoom input { width: 80px; height: 11px; appearance: none; background: linear-gradient(#8a8a8a, #8a8a8a) center / 100% 1px no-repeat, linear-gradient(#8a8a8a, #8a8a8a) center / 1px 5px no-repeat; }
.zoom input::-webkit-slider-thumb { appearance: none; width: 4px; height: 9px; background: #b0b0b0; }
.zv { margin-left: 8px; }

.taskbar { display: grid; grid-template-columns: 348fr 511fr 341fr; align-items: center; height: 37px; padding-bottom: 1px; background: linear-gradient(90deg, #1b222a, #1b2a36 22%, #22232a 36%, #1c222b 60%, #1f2329); border-top: 1px solid #2c2f34; font-size: 9px; }
.weather { display: flex; align-items: flex-start; gap: 4px; padding-left: 17px; }
.weather span { line-height: 12px; font-size: 9px; }
.weather em { font-style: normal; color: #a8adb3; }
.apps { display: flex; align-items: center; }
.tsearch { display: flex; align-items: center; width: 172px; height: 26px; margin-left: 10px; padding: 0 4px 0 9px; border-radius: 13px; background: #3c3f45; }
.tsearch input { flex: 1; margin-left: 7px; font-size: 10px; }
.tsearch input::placeholder { color: #c4c6ca; opacity: 1; }
.icons { flex: 1; display: grid; grid-template-columns: repeat(9, 1fr); margin-left: 2px; }
.icons .ib { height: 32px; position: relative; }
.badge { position: absolute; left: 18px; top: 2px; width: 16px; height: 12px; border-radius: 6px; background: #4cc2ff; color: #12303f; line-height: 12px; text-align: center; font-size: 8px; }
.active { background: #2b2f35; border-radius: 3px; }
.active::after, .run::after { content: ""; position: absolute; bottom: 1px; width: 12px; height: 2px; border-radius: 1px; background: #4cc2ff; }
.run::after { width: 4px; background: #8a8a8a; }
.tray { display: flex; align-items: center; justify-content: flex-end; gap: 6px; padding-right: 15px; }
.cloud { margin: 0 6px; }
.lang, .clock { line-height: 12px; text-align: center; }
.lang { margin-right: 7px; }
.clock { margin-left: 8px; text-align: right; }
</style>
